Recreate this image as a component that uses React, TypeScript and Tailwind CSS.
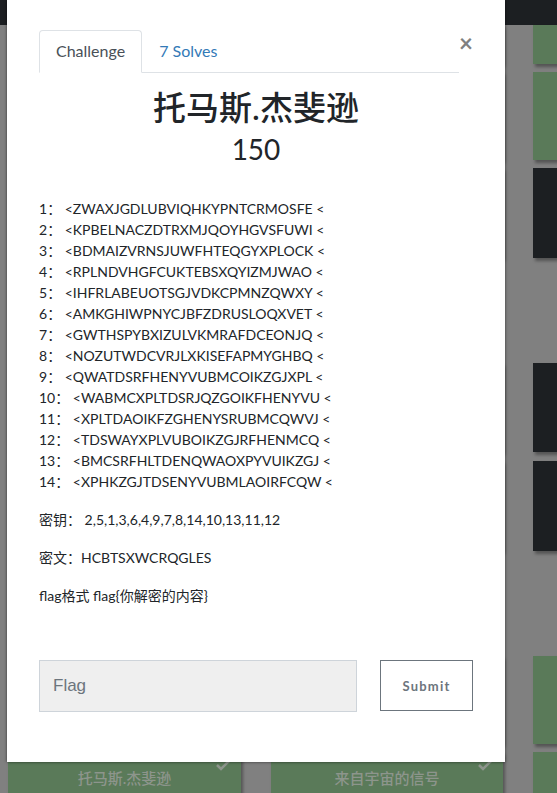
import React from "react";

const G = "bg-[#5a7a59]";
const D = "bg-[#1c1f22]";
const shadow = "shadow-[2px_3px_3px_rgba(0,0,0,0.35)]";

function Card({ color, h, children }: { color: string; h: string; children?: React.ReactNode }) {
  return <div className={`${color} ${h} ${shadow} relative`}>{children}</div>;
}

function Check() {
  return (
    <svg className="absolute right-[10px] top-[6px]" width="16" height="14" viewBox="0 0 16 14">
      <polyline points="2,7 6,11 14,3" fill="none" stroke="#8d958c" strokeWidth="2.5" />
    </svg>
  );
}

const lines = [
  "ZWAXJGDLUBVIQHKYPNTCRMOSFE",
  "KPBELNACZDTRXMJQOYHGVSFUWI",
  "BDMAIZVRNSJUWFHTEQGYXPLOCK",
  "RPLNDVHGFCUKTEBSXQYIZMJWAO",
  "IHFRLABEUOTSGJVDKCPMNZQWXY",
  "AMKGHIWPNYCJBFZDRUSLOQXVET",
  "GWTHSPYBXIZULVKMRAFDCEONJQ",
  "NOZUTWDCVRJLXKISEFAPMYGHBQ",
  "QWATDSRFHENYVUBMCOIKZGJXPL",
  "WABMCXPLTDSRJQZGOIKFHENYVU",
  "XPLTDAOIKFZGHENYSRUBMCQWVJ",
  "TDSWAYXPLVUBOIKZGJRFHENMCQ",
  "BMCSRFHLTDENQWAOXPYVUIKZGJ",
  "XPHKZGJTDSENYVUBMLAOIRFCQW",
];

export default function App() {
  return (
    <div className="relative w-[557px] h-[793px] overflow-hidden bg-[#808080] font-['Lato','Noto_Sans_CJK_SC',sans-serif]">
      {/* page behind the overlay */}
      <div className="flex flex-col">
        <div className="h-[25px] bg-[#1c1f22]" />
        <div className="grid grid-cols-[233px_232px_233px] gap-x-[30px] pl-[8px]">
          <Card color={G} h="h-[39px]" />
          <Card color={G} h="h-[39px]" />
          <Card color={G} h="h-[39px]" />
        </div>
        <div className="mt-[8px] grid grid-cols-[233px_232px_233px] gap-x-[30px] pl-[8px]">
          <Card color={G} h="h-[88px]" />
          <Card color={G} h="h-[88px]" />
          <Card color={G} h="h-[88px]" />
        </div>
        <div className="mt-[8px] grid grid-cols-[233px_232px_233px] gap-x-[30px] pl-[8px]">
          <Card color={D} h="h-[90px]" />
          <Card color={D} h="h-[90px]" />
          <Card color={D} h="h-[90px]" />
        </div>
        <div className="mt-[105px] grid grid-cols-[233px_232px_233px] gap-x-[30px] pl-[8px]">
          <Card color={D} h="h-[89px]" />
          <Card color={D} h="h-[89px]" />
          <Card color={D} h="h-[89px]" />
        </div>
        <div className="mt-[9px] grid grid-cols-[233px_232px_233px] gap-x-[30px] pl-[8px]">
          <Card color={D} h="h-[90px]" />
          <Card color={D} h="h-[90px]" />
          <Card color={D} h="h-[90px]" />
        </div>
        <div className="mt-[105px] grid grid-cols-[233px_232px_233px] gap-x-[30px] pl-[8px]">
          <Card color={G} h="h-[88px]" />
          <Card color={G} h="h-[88px]" />
          <Card color={G} h="h-[88px]" />
        </div>
        <div className="mt-[8px] grid grid-cols-[233px_232px_233px] gap-x-[30px] pl-[8px]">
          <Card color={G} h="h-[88px]">
            <Check />
            <div className="pt-[16px] text-center text-[15px] leading-[20px] font-medium text-[#8d958c]">托马斯.杰斐逊</div>
          </Card>
          <Card color={G} h="h-[88px]">
            <Check />
            <div className="pt-[16px] text-center text-[15px] leading-[20px] font-medium text-[#8d958c]">来自宇宙的信号</div>
          </Card>
          <Card color={G} h="h-[88px]" />
        </div>
      </div>

      {/* modal */}
      <div className="absolute left-[7px] top-0 w-[498px] h-[762px] bg-white px-[32px] pt-[30px] shadow-[0_0_3px_rgba(0,0,0,0.6)]">
        <div className="flex items-start">
          <div className="flex flex-1 border-b border-[#dee2e6]">
            <div className="-mb-px rounded-t-[4px] border border-[#dee2e6] border-b-white bg-white px-4 py-2 text-[16px] leading-6 text-[#495057]">
              Challenge
            </div>
            <div className="border border-transparent px-4 py-2 text-[16px] leading-6 text-[#337ab7]">7 Solves</div>
          </div>
          <div className="w-[14px] pt-[1px] text-center text-[24px] leading-[24px] font-bold text-[#808080]">×</div>
        </div>

        <div className="mt-[15px] text-center text-[33px] leading-[38px] font-medium text-[#212529]">托马斯.杰斐逊</div>
        <div className="mt-[6px] text-center text-[28px] leading-[34px] text-[#212529]">150</div>

        <div className="mt-[32px] text-[14px] leading-[21px] text-[#212529]">
          <p className="mb-[17px]">
            {lines.map((l, i) => (
              <span key={i}>
                {i + 1}： &lt;{l} &lt;
                <br />
              </span>
            ))}
          </p>
          <p className="mb-[17px]">密钥： 2,5,1,3,6,4,9,7,8,14,10,13,11,12</p>
          <p className="mb-[17px]">密文：HCBTSXWCRQGLES</p>
          <p className="mb-[16px]">flag格式 flag{"{"}你解密的内容{"}"}</p>
        </div>

        <div className="mt-[54px] flex gap-[23px]">
          <input
            className="h-[52px] w-[318px] border border-[#ced4da] bg-[#efefef] px-[13px] text-[17px] font-['Liberation_Sans',sans-serif] placeholder:text-[#6c757d] outline-none"
            placeholder="Flag"
          />
          <button className="h-[51px] w-[93px] border border-[#6c757d] bg-white pt-[2px] text-[13px] font-bold tracking-[1.2px] text-[#6c757d]">
            Submit
          </button>
        </div>
      </div>
    </div>
  );
}
